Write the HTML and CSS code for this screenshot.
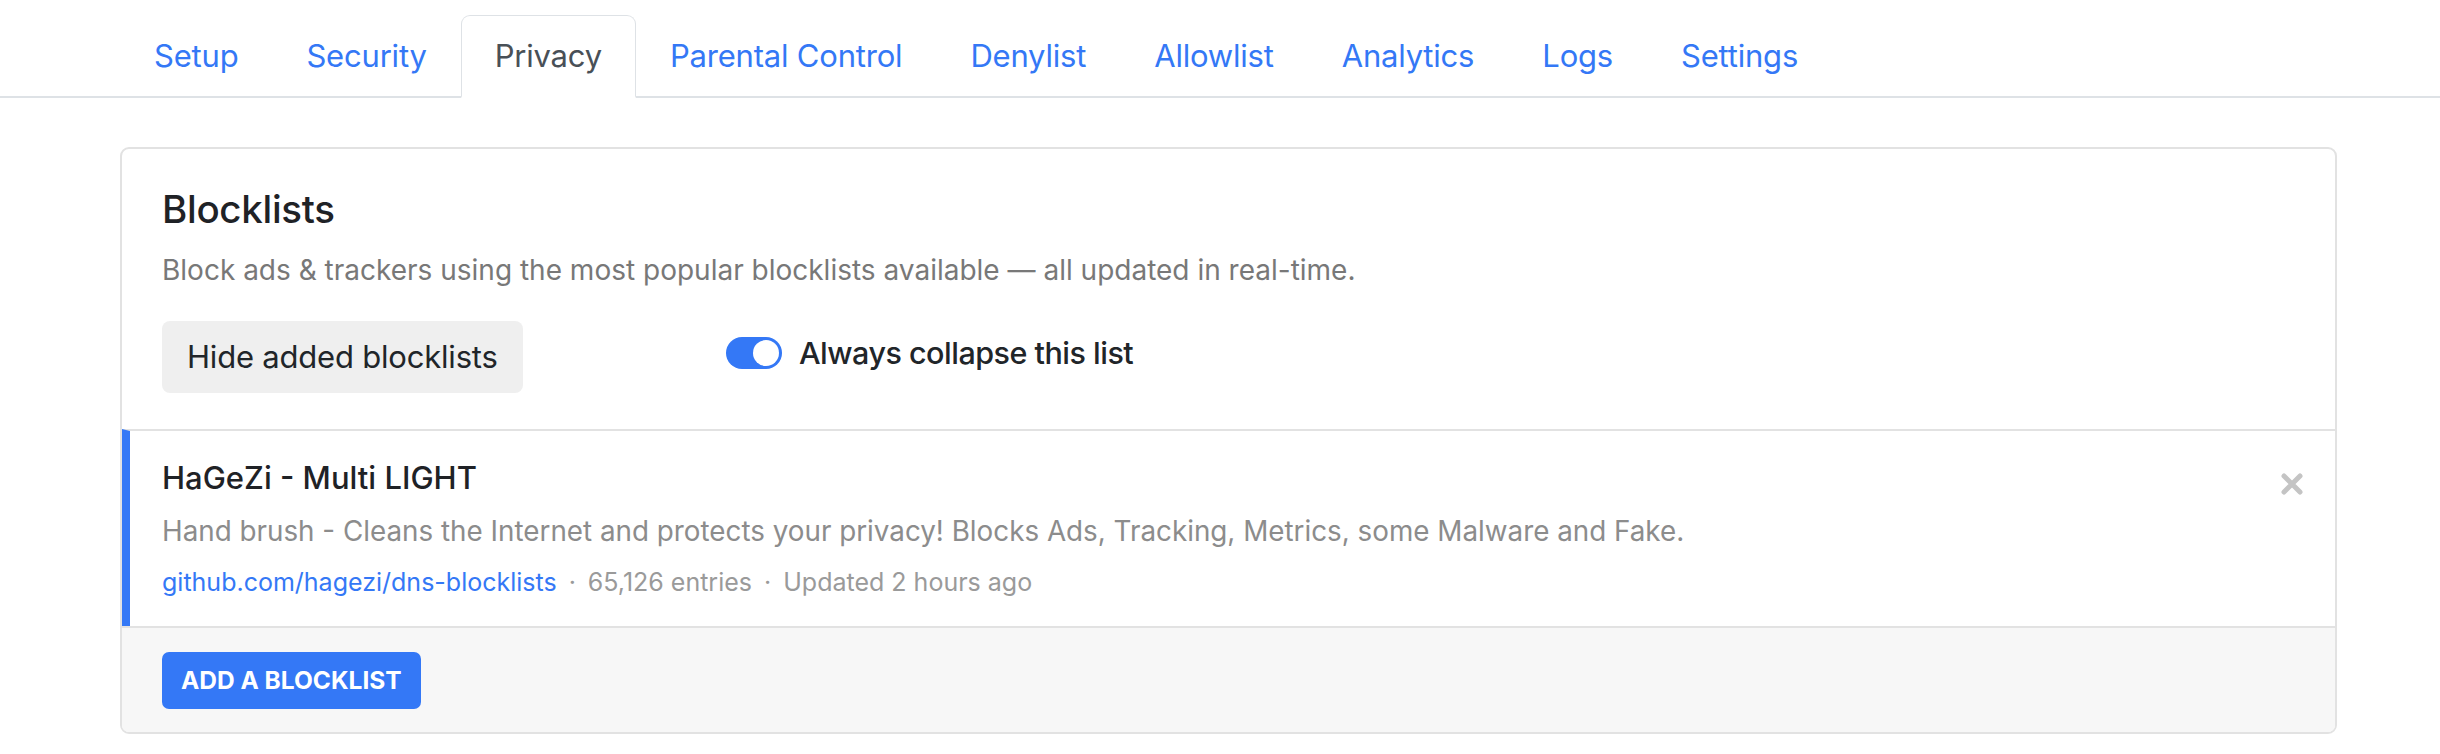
FILE: index.html
```html
<!DOCTYPE html>
<html lang="en">
<head>
<meta charset="utf-8">
<title>Privacy</title>
<link rel="stylesheet" href="styles.css">
</head>
<body>
<nav class="tabs">
  <ul class="tab-list">
    <li><a class="tab-link" href="#">Setup</a></li>
    <li><a class="tab-link" href="#">Security</a></li>
    <li><a class="tab-link active" href="#">Privacy</a></li>
    <li><a class="tab-link" href="#">Parental Control</a></li>
    <li><a class="tab-link" href="#">Denylist</a></li>
    <li><a class="tab-link" href="#">Allowlist</a></li>
    <li><a class="tab-link" href="#">Analytics</a></li>
    <li><a class="tab-link" href="#">Logs</a></li>
    <li><a class="tab-link" href="#">Settings</a></li>
  </ul>
</nav>
<main class="container">
  <section class="card">
    <div class="card-body">
      <h2 class="card-title">Blocklists</h2>
      <p class="card-desc">Block ads &amp; trackers using the most popular blocklists available — all updated in real-time.</p>
      <div class="controls">
        <div class="control-cell">
          <button class="btn-light" type="button">Hide added blocklists</button>
        </div>
        <label class="switch">
          <span class="switch-track"><span class="switch-knob"></span></span>
          <span class="switch-label">Always collapse this list</span>
        </label>
      </div>
    </div>
    <div class="list-item">
      <div class="item-title">HaGeZi - Multi LIGHT</div>
      <div class="item-desc">Hand brush - Cleans the Internet and protects your privacy! Blocks Ads, Tracking, Metrics, some Malware and Fake.</div>
      <div class="item-meta"><a class="item-link" href="#">github.com/hagezi/dns-blocklists</a><span class="sep">·</span>65,126 entries<span class="sep">·</span>Updated 2 hours ago</div>
      <button class="remove-btn" type="button" aria-label="Remove">
        <svg width="22" height="22" viewBox="0 0 22 22"><path d="M3 3 L19 19 M19 3 L3 19" stroke="#c4c4c4" stroke-width="5" stroke-linecap="round" fill="none"/></svg>
      </button>
    </div>
    <div class="card-footer">
      <button class="btn-primary" type="button">ADD A BLOCKLIST</button>
    </div>
  </section>
</main>
</body>
</html>
```

FILE: styles.css
```css
* { box-sizing: border-box; }

body {
  margin: 0;
  font-family: Inter, "Noto Sans", "Liberation Sans", sans-serif;
  color: #212529;
  background: #fff;
}

.tabs {
  padding-top: 15px;
  border-bottom: 2px solid #dee2e6;
}

.tab-list {
  list-style: none;
  margin: 0;
  padding: 0 0 0 120px;
  display: flex;
}

.tab-link {
  display: block;
  padding: 16px 33px;
  font-size: 31px;
  letter-spacing: -0.2px;
  line-height: 48px;
  color: #3478f6;
  text-decoration: none;
  border: 1px solid transparent;
  border-radius: 9px 9px 0 0;
  margin-bottom: -2px;
}

.tab-link.active {
  color: #495057;
  background: #fff;
  border-color: #dee2e6 #dee2e6 #fff;
  border-bottom-width: 2px;
}

.container {
  margin: 49px 103px 0 120px;
}

.card {
  border: 2px solid #e2e2e2;
  border-radius: 9px;
  overflow: hidden;
  background: #fff;
}

.card-body {
  padding: 36px 40px 36px 40px;
}

.card-title {
  margin: 0;
  font-size: 38.5px;
  letter-spacing: -0.3px;
  line-height: 48px;
  font-weight: 500;
  color: #1f2226;
}

.card-desc {
  margin: 16px 0 0;
  font-size: 28px;
  line-height: 42px;
  color: #787878;
}

.controls {
  margin-top: 30px;
  display: grid;
  grid-template-columns: 564px auto;
  align-items: start;
}

.control-cell {
  display: flex;
}

.btn-light {
  font-family: inherit;
  font-size: 31px;
  letter-spacing: -0.2px;
  line-height: 48px;
  padding: 12px 25px;
  border: 0;
  border-radius: 8px;
  background: #efefef;
  color: #212529;
}

.switch {
  display: flex;
  align-items: center;
  gap: 17px;
  margin-top: 8px;
}

.switch-track {
  width: 56px;
  height: 32px;
  border-radius: 16px;
  background: #3478f6;
  display: flex;
  align-items: center;
  justify-content: flex-end;
  padding-right: 3px;
}

.switch-knob {
  width: 26px;
  height: 26px;
  border-radius: 50%;
  background: #fff;
}

.switch-label {
  font-size: 30.5px;
  letter-spacing: -0.5px;
  line-height: 48px;
  font-weight: 500;
  color: #212529;
}

.list-item {
  position: relative;
  border-top: 2px solid #e2e2e2;
  border-left: 8px solid #3478f6;
  padding: 23px 40px 24px 32px;
}

.item-title {
  font-size: 31px;
  line-height: 48px;
  font-weight: 500;
  color: #1f2226;
}

.item-desc {
  margin-top: 8px;
  font-size: 27.8px;
  line-height: 43px;
  color: #8c8c8c;
}

.item-meta {
  margin-top: 10px;
  font-size: 25px;
  line-height: 39px;
  color: #9a9a9a;
}

.item-link {
  color: #3478f6;
  text-decoration: none;
}

.sep {
  margin: 0 12px;
}

.remove-btn {
  position: absolute;
  top: 42px;
  right: 32px;
  width: 22px;
  height: 22px;
  padding: 0;
  border: 0;
  background: none;
  display: block;
}

.remove-btn svg { display: block; }

.card-footer {
  border-top: 2px solid #e2e2e2;
  background: #f7f7f7;
  padding: 24px 40px 23px;
}

.btn-primary {
  font-family: inherit;
  font-size: 24.5px;
  line-height: 37px;
  font-weight: 700;
  padding: 10px 19px;
  border: 0;
  border-radius: 7px;
  background: #3478f6;
  color: #fff;
  display: block;
}
```
